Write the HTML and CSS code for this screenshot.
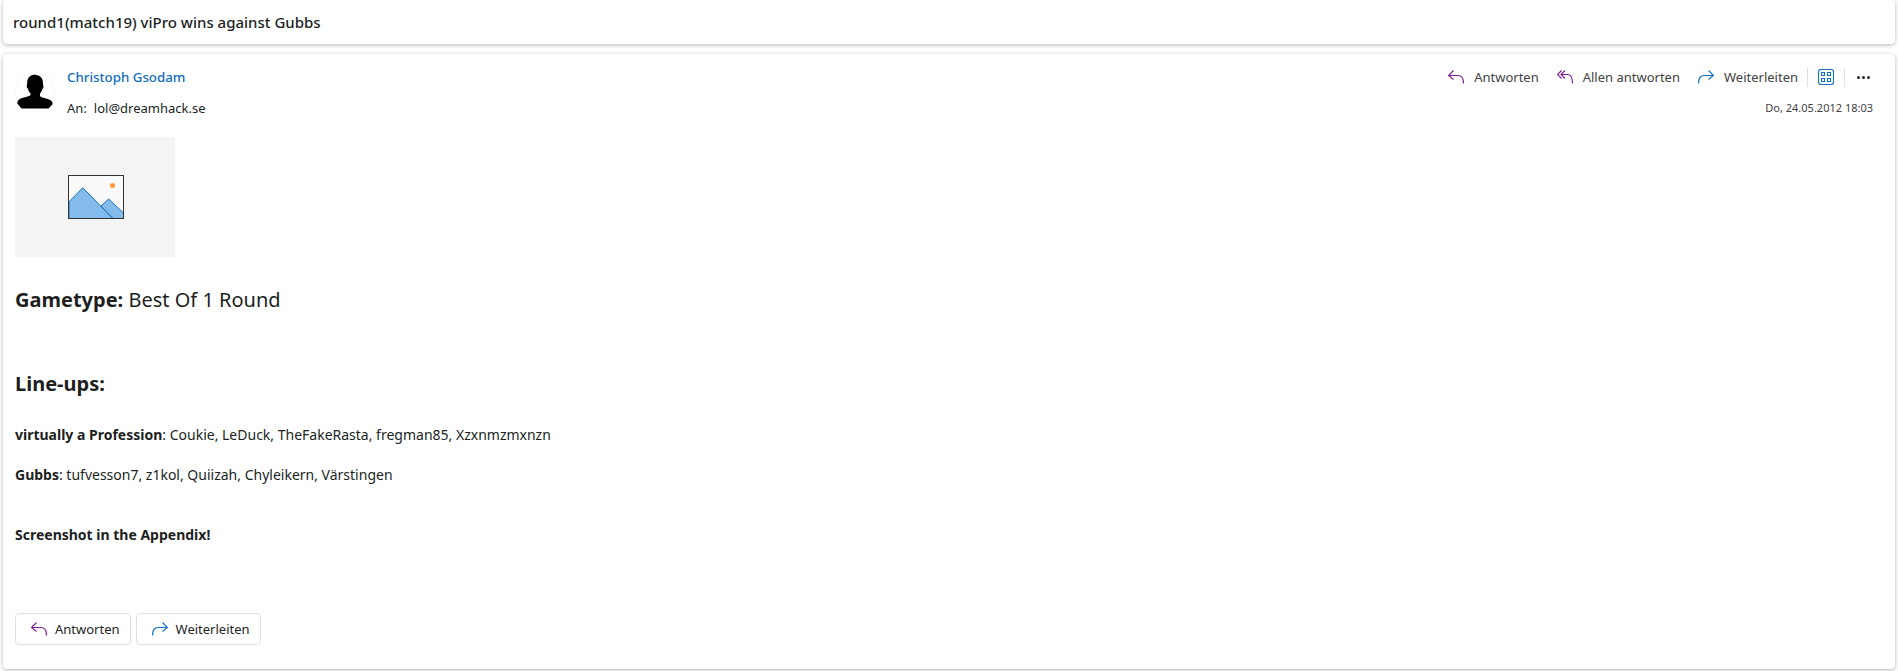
FILE: index.html
```html
<!DOCTYPE html>
<html lang="de">
<head>
<meta charset="utf-8">
<title>round1(match19) viPro wins against Gubbs</title>
<link rel="stylesheet" href="styles.css">
</head>
<body>
<header class="card subject">round1(match19) viPro wins against Gubbs</header>
<main class="card message">
  <section class="head">
    <svg class="avatar" viewBox="0 0 40 40" aria-hidden="true">
      <circle cx="20" cy="20" r="19.500" fill="#fff" stroke="#f7f6ee"/>
      <path fill="#000" d="M20.500 3c4.500 0 7.500 3 7.500 8 0 1.500.3 2.500.5 3.500 0 1.300-.7 2.300-1.300 2.800-.5 2-1.200 3.400-2.200 4.200v2.500c1 1.300 5 2 8.500 3.200 2.500.9 3.500 2 4 3.800l-.1 1.500-3.900 4H6.500L2.200 31.500l.3-1.500c.5-1.800 1.500-2.900 4-3.800 3.500-1.200 8-1.900 9-3.200v-1.500c-1.200-1-2-2.700-2.500-4.700-.7-.5-1.300-1.500-1.300-2.800.2-1 .5-2 .5-3.500 0-5 3.300-8 8.300-8z"/>
    </svg>
    <div class="who">
      <a class="sender">Christoph Gsodam</a>
      <div class="to"><span class="to-label">An:</span>lol@dreamhack.se</div>
    </div>
    <div class="meta">
      <div class="actions">
        <button class="action">
          <svg class="ico" viewBox="0 0 16 14"><path class="purple" d="M5.500 .5.500 5.500 5.500 9.500M.5 5.500H10c3 0 5.500 2.500 5.500 8"/></svg>Antworten
        </button>
        <button class="action">
          <svg class="ico" viewBox="0 0 16 14"><path class="purple" d="M4.500 .5.500 4.500 4.500 8.500M8 .5 4 4.500 8 8.500M4 4.500h6.500c3 0 5 3 5 9"/></svg>Allen antworten
        </button>
        <button class="action">
          <svg class="ico" viewBox="0 0 16 14"><path class="blue" d="M10.500 .5 15.500 5.500 10.500 9.500M15.500 5.500H6c-3 0-5.500 2.500-5.500 8"/></svg>Weiterleiten
        </button>
        <span class="sep"></span>
        <svg class="grid" viewBox="0 0 16 16"><rect class="blue" x=".5" y=".5" width="15" height="15" rx="2.500"/><path class="blue" d="M3.500 3.500h3v3h-3zM9.500 3.500h3v3h-3zM3.500 9.500h3v3h-3zM9.500 9.500h3v3h-3z"/></svg>
        <span class="sep"></span>
        <span class="more"><i></i><i></i><i></i></span>
      </div>
      <time class="date">Do, 24.05.2012 18:03</time>
    </div>
  </section>

  <section class="body">
    <div class="placeholder">
      <svg viewBox="0 0 56 44" class="pic">
        <rect x="1" y="1" width="54" height="42" fill="#fafafa"/>
        <path d="M1 27 14.700 12.700 45 43.500H1z" fill="#83bcec" stroke="#1a6fb8"/>
        <path d="M33 31 40.700 24 55.500 38V43.500H45z" fill="#83bcec" stroke="#1a6fb8"/>
        <circle cx="44.500" cy="10.500" r="2.500" fill="#ff9a3d"/>
        <rect x=".5" y=".5" width="55" height="43" fill="none" stroke="#333"/>
      </svg>
    </div>
    <h2 class="gametype"><b>Gametype:</b> Best Of 1 Round</h2>
    <h2 class="lineups">Line-ups:</h2>
    <p class="line first"><b>virtually a Profession</b>: Coukie, LeDuck, TheFakeRasta, fregman85, Xzxnmzmxnzn</p>
    <p class="line second"><b>Gubbs</b>: tufvesson7, z1kol, Quiizah, Chyleikern, Värstingen</p>
    <p class="line third"><b>Screenshot in the Appendix!</b></p>
  </section>

  <footer class="foot">
    <button class="outline">
      <svg class="ico" viewBox="0 0 16 14"><path class="purple" d="M5.500 .5.500 5.500 5.500 9.500M.5 5.500H10c3 0 5.500 2.500 5.500 8"/></svg>Antworten
    </button>
    <button class="outline">
      <svg class="ico" viewBox="0 0 16 14"><path class="blue" d="M10.500 .5 15.500 5.500 10.500 9.500M15.500 5.500H6c-3 0-5.500 2.500-5.500 8"/></svg>Weiterleiten
    </button>
  </footer>
</main>
</body>
</html>
```
FILE: styles.css
```css
* { box-sizing: border-box; }
html, body { height: 100%; }
body {
  margin: 0;
  padding: 0 3px;
  background: #fff;
  color: #201f1e;
  font-family: "Noto Sans", "Open Sans", sans-serif;
  font-size: 13px;
  overflow: hidden;
}
.card {
  background: #fff;
  border-radius: 4px;
  box-shadow: 0 1px 4px rgba(0, 0, 0, .3);
}
.subject {
  height: 44px;
  padding: 0 10px;
  display: flex;
  align-items: center;
  font-size: 15px;
  font-weight: 500;
}
.message {
  margin-top: 10px;
  height: 615px;
  padding: 18px 12px 0;
  display: flex;
  flex-direction: column;
}
.head { display: flex; height: 65px; }
.avatar { width: 40px; height: 40px; flex: none; }
.who { margin-left: 12px; }
.sender {
  display: block;
  height: 20px;
  line-height: 10px;
  font-size: 13.300px;
  color: #0f6cbd;
  font-weight: 500;
}
.to { margin-top: 8px; line-height: 16px; }
.to-label { margin-right: 7px; }
.meta {
  margin-left: auto;
  margin-top: -7px;
  display: flex;
  flex-direction: column;
  align-items: flex-end;
}
.actions { display: flex; align-items: center; height: 24px; color: #424242; }
.action, .outline {
  display: flex;
  align-items: center;
  font: inherit;
  color: inherit;
  background: none;
  border: 0;
  padding: 0;
}
.action { margin-right: 18px; }
.action + .sep { margin-left: -9px; }
.ico { width: 16px; height: 14px; margin-right: 10px; flex: none; }
.purple, .blue { fill: none; stroke-width: 1.150; }
.purple { stroke: #7f1f9b; }
.blue { stroke: #1473c9; }
.sep { width: 1px; height: 19px; background: #e0e0e0; }
.grid { width: 16px; height: 16px; margin: 0 10px; }
.more { display: flex; gap: 2px; margin: 0 13px 0 12px; }
.more i { width: 3px; height: 3px; border-radius: 50%; background: #242424; }
.date {
  margin-top: 12px;
  margin-right: 10px;
  font-size: 11px;
  line-height: 14px;
  color: #424242;
}
.body { flex: 1; }
.placeholder {
  width: 160px;
  height: 120px;
  padding-left: 2px;
  background: #f4f4f4;
  display: flex;
  align-items: center;
  justify-content: center;
}
.pic { width: 56px; height: 44px; }
h2 { margin: 0; font-size: 20px; line-height: 28px; font-weight: 400; }
.gametype { margin-top: 29px; }
.lineups { margin-top: 56px; font-weight: 700; }
.line { margin: 0; font-size: 14px; line-height: 18px; }
.first { margin-top: 28px; }
.second { margin-top: 22px; }
.third { margin-top: 42px; }
.foot { display: flex; gap: 5px; padding-bottom: 24px; }
.outline {
  height: 32px;
  padding: 0 10px 0 15px;
  border: 1px solid #e0e0e0;
  border-radius: 4px;
  color: #242424;
}
.outline .ico { margin-right: 8px; }
```
